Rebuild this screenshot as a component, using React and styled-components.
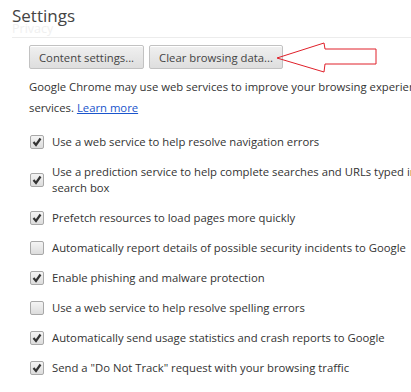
import styled, { createGlobalStyle } from "styled-components";

const GlobalStyle = createGlobalStyle`
    html, body {
        margin: 0;
        padding: 0;
        background: #fff;
        overflow: hidden;
    }
    body {
        font-family: "Open Sans", "Noto Sans", sans-serif;
        color: #333;
    }
`

const Page = styled.div`
    width: 640px;
    height: 392px;
    padding: 5px 0 0 12px;
    box-sizing: border-box;
`

const Title = styled.h1`
    margin: 0;
    font-size: 17px;
    font-weight: 400;
    line-height: 22px;
    color: #444;
`

const SubTitle = styled.h2`
    margin: -6px 0 0 0;
    font-size: 12.5px;
    font-weight: 400;
    line-height: 16px;
    color: #f0f0f0;
    border-bottom: 1px solid #ececec;
`

const Section = styled.div`
    padding: 7px 0 0 17px;
`

const ButtonRow = styled.div`
    display: flex;
    gap: 5px;
    position: relative;
`

const Button = styled.button`
    height: 24px;
    padding: 0 9px;
    font-family: inherit;
    font-size: 11.3px;
    color: #444;
    background: linear-gradient(#f0f0f0, #dedede);
    border: 1px solid #c2c2c2;
    border-radius: 2px;
    box-shadow: inset 0 1px 0 #fff;
`

const Arrow = styled.svg`
    position: absolute;
    left: 246px;
    top: -3px;
    overflow: visible;
`

const Paragraph = styled.p`
    margin: 7px 0 0 0;
    font-size: 11.3px;
    line-height: 21px;
    white-space: nowrap;
`

const Link = styled.a`
    color: #1a55cc;
    text-decoration: underline;
`

const List = styled.ul`
    list-style: none;
    margin: 16px 0 0 0;
    padding: 0;
    display: flex;
    flex-direction: column;
    gap: 14px;
`

const Item = styled.li`
    display: flex;
    align-items: center;
    gap: 8px;
    font-size: 11.3px;
    line-height: 16px;
    white-space: nowrap;
`

const Box = styled.span`
    width: 12px;
    height: 12px;
    flex: none;
    margin-left: 1px;
    border: 1px solid #a8a8a8;
    border-radius: 2px;
    background: linear-gradient(#f4f4f4, #dcdcdc);
    display: flex;
    align-items: center;
    justify-content: center;
`

const options = [
    { checked: true, text: "Use a web service to help resolve navigation errors" },
    { checked: true, text: "Use a prediction service to help complete searches and URLs typed in the address bar or app launcher", more: "search box" },
    { checked: true, text: "Prefetch resources to load pages more quickly" },
    { checked: false, text: "Automatically report details of possible security incidents to Google" },
    { checked: true, text: "Enable phishing and malware protection" },
    { checked: false, text: "Use a web service to help resolve spelling errors" },
    { checked: true, text: "Automatically send usage statistics and crash reports to Google" },
    { checked: true, text: "Send a \"Do Not Track\" request with your browsing traffic" },
]

const Check = () => (
    <svg width="10" height="10" viewBox="0 0 10 10">
        <path d="M1.5 5 L4 8 L8.5 1.5" fill="none" stroke="#333" strokeWidth="2.2" />
    </svg>
)

const App = () => {
    return (
        <Page>
            <GlobalStyle />
            <Title>Settings</Title>
            <SubTitle>Privacy</SubTitle>
            <Section>
                <ButtonRow>
                    <Button>Content settings...</Button>
                    <Button>Clear browsing data...</Button>
                    <Arrow width="100" height="32" viewBox="0 0 100 32">
                        <polygon points="2,16 49,1 50,7 101,7 101,22 50,22 49,30" fill="none" stroke="#e0202a" strokeWidth="1" />
                    </Arrow>
                </ButtonRow>
                <Paragraph>
                    Google Chrome may use web services to improve your browsing experience. You may optionally disable these
                    <br />
                    services. <Link href="#">Learn more</Link>
                </Paragraph>
                <List>
                    {options.map((o) => (
                        <Item key={o.text}>
                            <Box>{o.checked && <Check />}</Box>
                            <span>
                                {o.text}
                                {o.more && <><br />{o.more}</>}
                            </span>
                        </Item>
                    ))}
                </List>
            </Section>
        </Page>
    );
}

export default App
